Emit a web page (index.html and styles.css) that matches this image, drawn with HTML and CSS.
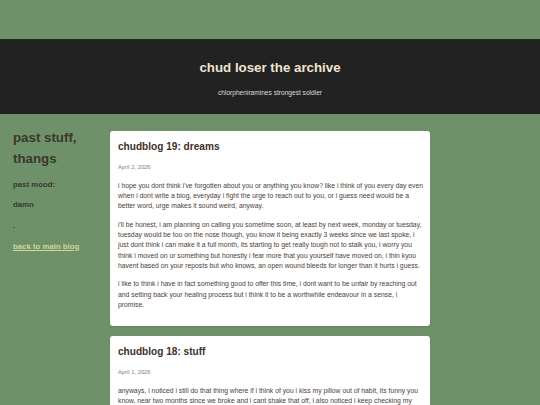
FILE: index.html
```html
<!DOCTYPE html>
<html lang="en">
<head>
<meta charset="utf-8">
<title>chud loser the archive</title>
<link rel="stylesheet" href="styles.css">
</head>
<body>
<header class="site-header">
  <h1 class="site-title">chud loser the archive</h1>
  <p class="site-sub">chlorpheniramines strongest soldier</p>
</header>
<div class="layout">
  <aside class="sidebar">
    <h2 class="side-title">past stuff, thangs</h2>
    <p class="side-item">past mood:</p>
    <p class="side-item">damn</p>
    <p class="side-item">.</p>
    <p class="side-item"><a class="side-link" href="#">back to main blog</a></p>
  </aside>
  <main class="feed">
    <article class="post">
      <h3 class="post-title">chudblog 19: dreams</h3>
      <p class="post-date">April 2, 2026</p>
      <p class="post-text">i hope you dont think i've forgotten about you or anything you know? like i think of you every day even when i dont write a blog, everyday i fight the urge to reach out to you, or i guess need would be a better word, urge makes it sound weird, anyway.</p>
      <p class="post-text">i'll be honest, i am planning on calling you sometime soon, at least by next week, monday or tuesday, tuesday would be too on the nose though, you know it being exactly 3 weeks since we last spoke, i just dont think i can make it a full month, its starting to get really tough not to stalk you, i worry you think i moved on or something but honestly i fear more that you yourself have moved on, i thin kyou havent based on your reposts but who knows, an open wound bleeds for longer than it hurts i guess.</p>
      <p class="post-text">i like to think i have in fact something good to offer this time, i dont want to be unfair by reaching out and setting back your healing process but i think it to be a worthwhile endeavour in a sense, i promise.</p>
    </article>
    <article class="post">
      <h3 class="post-title">chudblog 18: stuff</h3>
      <p class="post-date">April 1, 2026</p>
      <p class="post-text">anyways, i noticed i still do that thing where if i think of you i kiss my pillow out of habit, its funny you know, near two months since we broke and i cant shake that off, i also noticed i keep checking my phone for messages that i know wont come, its silly i know.</p>
    </article>
  </main>
</div>
</body>
</html>
```

FILE: styles.css
```css
html, body {
  margin: 0;
  padding: 0;
}

body {
  background: #6f9169;
  font-family: "Liberation Sans", Arial, Helvetica, sans-serif;
  color: #3a362c;
}

.site-header {
  margin-top: 39px;
  height: 74.5px;
  box-sizing: border-box;
  background: #222222;
  padding-top: 21px;
  text-align: center;
}

.site-title {
  margin: 0;
  font-size: 13.3px;
  line-height: 16px;
  font-weight: bold;
  color: #efe4cf;
}

.site-sub {
  margin: 12px 0 0;
  font-size: 6.6px;
  line-height: 10px;
  color: #dedad2;
}

.layout {
  display: flex;
  align-items: flex-start;
  padding: 13.5px 0 0 13px;
}

.sidebar {
  width: 97px;
  flex: none;
}

.side-title {
  margin: 0 0 9.8px;
  font-size: 13.3px;
  line-height: 21px;
  font-weight: bold;
  color: #3b372d;
}

.side-item {
  margin: 0 0 8.3px;
  font-size: 7.8px;
  line-height: 12.3px;
  font-weight: bold;
  color: #3b372d;
}

.side-link {
  color: #cfd69a;
  text-decoration: underline;
}

.feed {
  width: 320px;
  flex: none;
  padding-top: 3.5px;
}

.post {
  background: #ffffff;
  border-radius: 3px;
  padding: 8.5px 5.5px 8px 8px;
  margin-bottom: 9.3px;
  box-shadow: 0 1px 2px rgba(0, 0, 0, 0.12);
}

.post-title {
  margin: 0 0 8px;
  font-size: 10.1px;
  line-height: 16px;
  font-weight: bold;
  color: #3c3029;
}

.post-date {
  margin: 0 0 8.7px;
  font-size: 5.8px;
  line-height: 9px;
  color: #85807b;
}

.post-text {
  margin: 0 0 8px;
  font-size: 6.8px;
  line-height: 10.35px;
  color: #4a3e39;
}
```
